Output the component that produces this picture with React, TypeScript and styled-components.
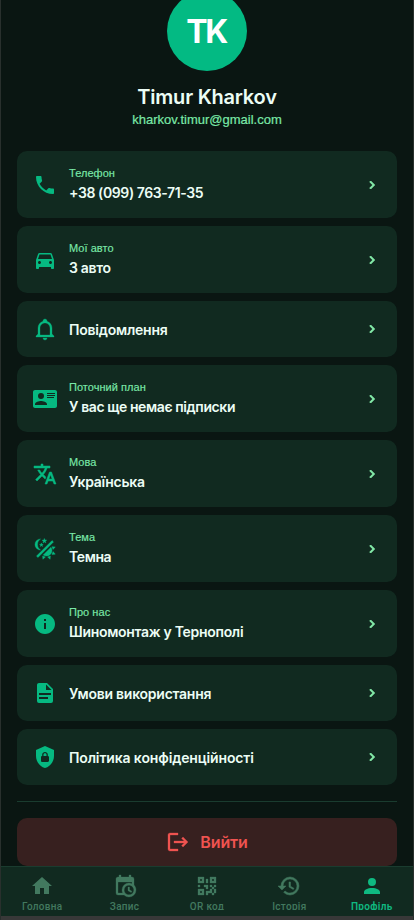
import React from "react";
import styled, { createGlobalStyle } from "styled-components";

const GlobalStyle = createGlobalStyle`
  * { box-sizing: border-box; }
  body { margin: 0; background: #0a1612; }
`;

const ICONS = {
  phone:
    "M6.62 10.79c1.44 2.83 3.76 5.14 6.59 6.59l2.2-2.2c.27-.27.67-.36 1.02-.24 1.12.37 2.33.57 3.57.57.55 0 1 .45 1 1V20c0 .55-.45 1-1 1-9.39 0-17-7.61-17-17 0-.55.45-1 1-1h3.5c.55 0 1 .45 1 1 0 1.25.2 2.45.57 3.57.11.35.03.74-.25 1.02l-2.2 2.2z",
  car: "M18.92 6.01C18.72 5.42 18.16 5 17.5 5h-11c-.66 0-1.21.42-1.42 1.01L3 12v8c0 .55.45 1 1 1h1c.55 0 1-.45 1-1v-1h12v1c0 .55.45 1 1 1h1c.55 0 1-.45 1-1v-8l-2.08-5.99zM6.5 16c-.83 0-1.5-.67-1.5-1.5S5.67 13 6.5 13s1.5.67 1.5 1.5S7.33 16 6.5 16zm11 0c-.83 0-1.5-.67-1.5-1.5s.67-1.5 1.5-1.5 1.5.67 1.5 1.5-.67 1.5-1.5 1.5zM5 11l1.5-4.5h11L19 11H5z",
  bell: "M10 21h4c0 1.1-.9 2-2 2s-2-.9-2-2m11-2v1H3v-1l2-2v-6c0-3.1 2-5.8 5-6.7V4c0-1.1.9-2 2-2s2 .9 2 2v.3c3 .9 5 3.6 5 6.7v6l2 2m-4-8c0-2.8-2.2-5-5-5s-5 2.2-5 5v7h10v-7z",
  card: "M2 3h20c1.05 0 2 .95 2 2v14c0 1.05-.95 2-2 2H2c-1.05 0-2-.95-2-2V5c0-1.05.95-2 2-2m12 3v1h8V6h-8m0 2v1h8V8h-8m0 2v1h7v-1h-7m-6 3.91C6 13.91 2 15 2 17v1h12v-1c0-2-4-3.09-6-3.09M8 6a3 3 0 0 0-3 3 3 3 0 0 0 3 3 3 3 0 0 0 3-3 3 3 0 0 0-3-3z",
  translate:
    "M12.87 15.07l-2.54-2.51.03-.03c1.74-1.94 2.98-4.17 3.71-6.53H17V4h-7V2H8v2H1v2h11.17C11.5 7.92 10.44 9.75 9 11.35 8.07 10.32 7.3 9.19 6.69 8h-2c.73 1.63 1.73 3.17 2.98 4.56l-5.09 5.02L4 19l5-5 3.11 3.11.76-2.04zM18.5 10h-2L12 22h2l1.12-3h4.75L21 22h2l-4.5-12zm-2.62 7l1.62-4.33L19.12 17h-3.24z",
  theme:
    "M7.5 2c-1.79 1.15-3 3.18-3 5.5s1.21 4.35 3.03 5.5C4.46 13 2 10.54 2 7.5A5.5 5.5 0 0 1 7.5 2m11.57 1.5l1.43 1.43L4.93 20.5 3.5 19.07 19.07 3.5m-6.18 2.43L11.41 5 9.97 6l.42-1.7L9 3.24l1.75-.12.58-1.65L12 3.1l1.73.03-1.35 1.13.51 1.67m-3.3 3.61l-1.16-.73-1.12.78.34-1.32-1.09-.83 1.36-.09.45-1.29.51 1.27 1.36.03-1.05.87.4 1.31M19 13.5a5.5 5.5 0 0 1-5.5 5.5c-1.22 0-2.35-.4-3.26-1.07l7.69-7.69c.67.91 1.07 2.04 1.07 3.26m-4.4 6.58l2.77-1.15-.24 3.35-2.53-2.2m4.33-2.7l1.15-2.77 2.2 2.54-3.35.23m1.15-4.96l-1.14-2.78 3.34.24-2.2 2.54M9.63 18.93l2.77 1.15-2.53 2.19-.24-3.34z",
  info: "M12 2C6.48 2 2 6.48 2 12s4.48 10 10 10 10-4.48 10-10S17.52 2 12 2zm1 15h-2v-6h2v6zm0-8h-2V7h2v2z",
  document:
    "M13 9h5.5L13 3.5V9M6 2h8l6 6v12a2 2 0 0 1-2 2H6a2 2 0 0 1-2-2V4c0-1.11.89-2 2-2m9 16v-2H6v2h9m3-4v-2H6v2h12z",
  shield:
    "M12 1L3 5v6c0 5.55 3.84 10.74 9 12 5.16-1.26 9-6.45 9-12V5l-9-4m0 6c1.4 0 2.8 1.1 2.8 2.5V11c.6 0 1.2.6 1.2 1.3v3.5c0 .6-.6 1.2-1.3 1.2H9.2c-.6 0-1.2-.6-1.2-1.3v-3.5c0-.6.6-1.2 1.2-1.2V9.5C9.2 8.1 10.6 7 12 7m0 1.2c-.8 0-1.5.5-1.5 1.3V11h3V9.5c0-.8-.7-1.3-1.5-1.3z",
  chevron: "M8.59 16.58L13.17 12 8.59 7.41 10 6l6 6-6 6-1.41-1.42z",
  logout:
    "M17 7l-1.41 1.41L18.17 11H8v2h10.17l-2.58 2.58L17 17l5-5zM4 5h8V3H4c-1.1 0-2 .9-2 2v14c0 1.1.9 2 2 2h8v-2H4V5z",
  home: "M10 20v-6h4v6h5v-8h3L12 3 2 12h3v8z",
  calendar:
    "M15 13h1.5v2.82l2.44 1.41-.75 1.3L15 16.69V13m4-5H5v11h4.67c-.43-.91-.67-1.93-.67-3a7 7 0 0 1 7-7c1.07 0 2.09.24 3 .67V8M5 21a2 2 0 0 1-2-2V5c0-1.11.89-2 2-2h1V1h2v2h8V1h2v2h1a2 2 0 0 1 2 2v6.1c1.24 1.26 2 2.99 2 4.9a7 7 0 0 1-7 7c-1.91 0-3.64-.76-4.9-2H5m11-9.85A4.85 4.85 0 0 0 11.15 16c0 2.68 2.17 4.85 4.85 4.85A4.85 4.85 0 0 0 20.85 16c0-2.68-2.17-4.85-4.85-4.85z",
  qr: "M3 11h2v2H3v-2m8-6h2v4h-2V5m-2 6h4v4h-2v-2H9v-2m6 0h2v2h2v-2h2v2h-2v2h2v4h-2v2h-2v-2h-4v2h-2v-4h4v-2h2v-2h-2v-2m4 8v-4h-2v4h2M15 3h6v6h-6V3m2 2v2h2V5h-2M3 3h6v6H3V3m2 2v2h2V5H5M3 15h6v6H3v-6m2 2v2h2v-2H5z",
  history:
    "M13.5 8H12v5l4.28 2.54.72-1.21-3.5-2.08V8M13 3a9 9 0 0 0-9 9H1l3.96 4.03L9 12H6a7 7 0 0 1 7-7 7 7 0 0 1 7 7 7 7 0 0 1-7 7c-1.93 0-3.68-.79-4.94-2.06l-1.42 1.42A8.896 8.896 0 0 0 13 21a9 9 0 0 0 9-9 9 9 0 0 0-9-9",
  person:
    "M12 4a4 4 0 0 1 4 4 4 4 0 0 1-4 4 4 4 0 0 1-4-4 4 4 0 0 1 4-4m0 10c4.42 0 8 1.79 8 4v2H4v-2c0-2.21 3.58-4 8-4z",
};

type IconName = keyof typeof ICONS;

/* Outline-like glyphs get a hairline stroke so they hold up at small sizes. */
const WEIGHT: Partial<Record<IconName, number>> = {
  chevron: 1.3,
  translate: 0.5,
  theme: 0.4,
  bell: 0.3,
  logout: 0.3,
  history: 0.5,
  qr: 0.3,
  calendar: 0.3,
};

const Glyph = styled.svg`
  display: block;
  flex: none;
  fill: currentColor;
  stroke: currentColor;
`;

const Icon = ({ name, size = 24 }: { name: IconName; size?: number }) => (
  <Glyph width={size} height={size} viewBox="0 0 24 24" strokeWidth={WEIGHT[name] ?? 0} aria-hidden>
    <path d={ICONS[name]} />
  </Glyph>
);

const Screen = styled.div`
  width: 414px;
  height: 920px;
  overflow: hidden;
  display: flex;
  flex-direction: column;
  background: #0a1612;
  border: solid #29302d;
  border-width: 0 1px;
  font-family: Inter, "Noto Sans", sans-serif;
`;

const Content = styled.main`
  height: 866px;
  flex: none;
  padding: 0 16px;
  overflow: hidden;
`;

const Header = styled.header`
  height: 151px;
  display: flex;
  flex-direction: column;
  align-items: center;
`;

const Avatar = styled.div`
  width: 80px;
  height: 80px;
  flex: none;
  margin-top: -9px;
  border-radius: 50%;
  display: flex;
  align-items: center;
  justify-content: center;
  background: #03ba83;
  color: #fff;
  font-size: 32px;
  font-weight: 700;
  letter-spacing: -2.4px;
  padding-right: 2px;
`;

const Name = styled.h1`
  margin: 12px 0 0;
  font-size: 20px;
  line-height: 28px;
  font-weight: 600;
  letter-spacing: -0.22px;
  color: #ecfdf5;
`;

const Email = styled.div`
  font: 13px/18px "Liberation Sans", sans-serif;
  color: #7ae8a8;
  -webkit-text-stroke: 0.2px;
`;

const List = styled.div`
  display: flex;
  flex-direction: column;
  gap: 8px;
`;

const Row = styled.button<{ $tall: boolean }>`
  height: ${(p) => (p.$tall ? 67 : 56)}px;
  width: 100%;
  padding: 0 17px 0 16px;
  border: 0;
  border-radius: 10px;
  display: flex;
  align-items: center;
  background: #112a20;
  color: #06b981;
  font-family: inherit;
  text-align: left;
`;

const RowText = styled.div`
  flex: 1;
  margin-left: 12px;
  white-space: nowrap;
`;

const Label = styled.div`
  font: 11px/15px "Liberation Sans", sans-serif;
  margin-bottom: 2px;
  color: #7ae8a8;
  letter-spacing: 0.04px;
  -webkit-text-stroke: 0.15px;
`;

const Value = styled.div<{ $spacing: number }>`
  font-size: 14px;
  line-height: 21px;
  font-weight: 600;
  letter-spacing: ${(p) => p.$spacing}px;
  color: #ecfdf5;

  ${Label} + & {
    margin-top: -1px;
    padding-bottom: 1px;
  }
`;

const Arrow = styled.span`
  color: #86efac;
`;

const Divider = styled.hr`
  height: 1px;
  margin: 16px 0;
  border: 0;
  background: #1a3c2f;
`;

const Logout = styled.button`
  width: 100%;
  height: 48px;
  padding: 0;
  border: 0;
  border-radius: 10px;
  display: flex;
  align-items: center;
  justify-content: center;
  gap: 10px;
  background: #37201f;
  color: #ef5350;
  font: 600 16px/24px Inter, sans-serif;
  letter-spacing: -0.15px;
`;

const Nav = styled.nav`
  height: 50px;
  flex: none;
  display: grid;
  grid-template-columns: repeat(5, 1fr);
  border-top: 1px solid #1a3c2f;
  background: #112a20;
`;

const Tab = styled.a<{ $active?: boolean }>`
  height: 43px;
  overflow: hidden;
  display: flex;
  flex-direction: column;
  align-items: center;
  padding-top: 7px;
  color: ${(p) => (p.$active ? "#0fb981" : "#42795f")};
`;

const TabLabel = styled.span<{ $active?: boolean }>`
  margin-top: 2px;
  font: ${(p) => (p.$active ? 600 : 500)} 10px/14px Roboto, sans-serif;
  white-space: nowrap;
  letter-spacing: 0.3px;
`;

const BottomEdge = styled.div`
  height: 4px;
  flex: none;
  margin: 0 -1px;
  background: #383838;
`;

interface Item {
  icon: IconName;
  label?: string;
  value: string;
  spacing: number;
}

const items: Item[] = [
  { icon: "phone", label: "Телефон", value: "+38 (099) 763-71-35", spacing: -0.4 },
  { icon: "car", label: "Мої авто", value: "3 авто", spacing: -0.3 },
  { icon: "bell", value: "Повідомлення", spacing: -0.22 },
  { icon: "card", label: "Поточний план", value: "У вас ще немає підписки", spacing: -0.4 },
  { icon: "translate", label: "Мова", value: "Українська", spacing: -0.28 },
  { icon: "theme", label: "Тема", value: "Темна", spacing: -0.4 },
  { icon: "info", label: "Про нас", value: "Шиномонтаж у Тернополі", spacing: -0.3 },
  { icon: "document", value: "Умови використання", spacing: -0.26 },
  { icon: "shield", value: "Політика конфіденційності", spacing: -0.14 },
];

const tabs: { icon: IconName; label: string; active?: boolean }[] = [
  { icon: "home", label: "Головна" },
  { icon: "calendar", label: "Запис" },
  { icon: "qr", label: "QR код" },
  { icon: "history", label: "Історія" },
  { icon: "person", label: "Профіль", active: true },
];

export default function App() {
  return (
    <>
      <GlobalStyle />
      <Screen>
        <Content>
          <Header>
            <Avatar>TK</Avatar>
            <Name>Timur Kharkov</Name>
            <Email>kharkov.timur@gmail.com</Email>
          </Header>
          <List>
            {items.map((item) => (
              <Row key={item.value} $tall={!!item.label}>
                <Icon name={item.icon} />
                <RowText>
                  {item.label && <Label>{item.label}</Label>}
                  <Value $spacing={item.spacing}>{item.value}</Value>
                </RowText>
                <Arrow>
                  <Icon name="chevron" size={16} />
                </Arrow>
              </Row>
            ))}
          </List>
          <Divider />
          <Logout>
            <Icon name="logout" />
            Вийти
          </Logout>
        </Content>
        <Nav>
          {tabs.map((tab) => (
            <Tab key={tab.label} $active={tab.active}>
              <Icon name={tab.icon} />
              <TabLabel $active={tab.active}>{tab.label}</TabLabel>
            </Tab>
          ))}
        </Nav>
        <BottomEdge />
      </Screen>
    </>
  );
}
